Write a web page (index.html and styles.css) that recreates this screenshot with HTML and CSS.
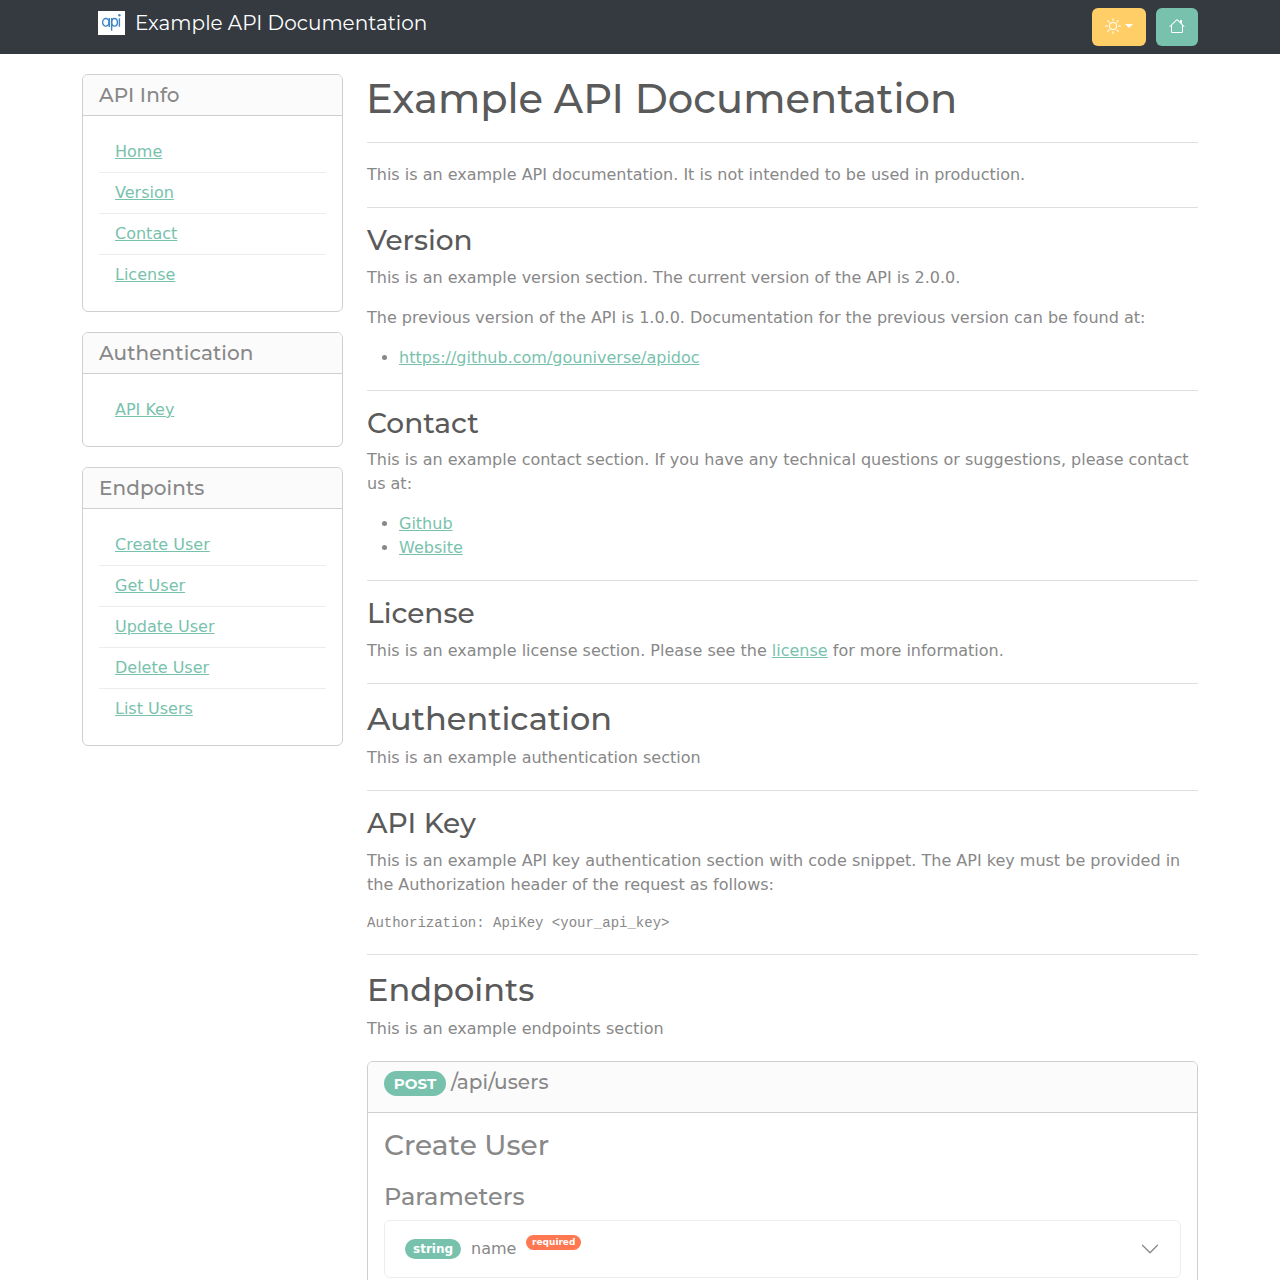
FILE: index.html
```html
<!DOCTYPE html>
<html lang="en">
<head>
<meta charset="utf-8">
<title>Example API Documentation</title>
<link rel="stylesheet" href="styles.css">
</head>
<body>
<header class="navbar">
  <div class="container navbar-inner">
    <a class="brand">
      <svg class="logo" width="27" height="24" viewBox="0 0 27 24" fill="none" stroke="#3d85c8" stroke-width="1.4"><rect width="27" height="24" fill="#fff" stroke="none"/><ellipse cx="7.8" cy="11.3" rx="3.2" ry="3.8"/><path d="M11.3 7v9M13.6 7v12.8M21.4 7.3v8.5"/><ellipse cx="16.5" cy="11.3" rx="2.9" ry="3.8"/><circle cx="21.4" cy="4.3" r="1.2" fill="#3d85c8" stroke="none"/></svg>
      <span class="brand-text">Example API Documentation</span>
    </a>
    <div class="actions">
      <button class="btn btn-warning"><svg width="16" height="16" fill="currentColor" viewBox="0 0 16 16"><path d="M8 11a3 3 0 1 1 0-6 3 3 0 0 1 0 6m0 1a4 4 0 1 0 0-8 4 4 0 0 0 0 8M8 0a.5.5 0 0 1 .5.5v2a.5.5 0 0 1-1 0v-2A.5.5 0 0 1 8 0m0 13a.5.5 0 0 1 .5.5v2a.5.5 0 0 1-1 0v-2A.5.5 0 0 1 8 13m8-5a.5.5 0 0 1-.5.5h-2a.5.5 0 0 1 0-1h2a.5.5 0 0 1 .5.5M3 8a.5.5 0 0 1-.5.5h-2a.5.5 0 0 1 0-1h2A.5.5 0 0 1 3 8m10.657-5.657a.5.5 0 0 1 0 .707l-1.414 1.415a.5.5 0 1 1-.707-.708l1.414-1.414a.5.5 0 0 1 .707 0m-9.193 9.193a.5.5 0 0 1 0 .707L3.05 13.657a.5.5 0 0 1-.707-.707l1.414-1.414a.5.5 0 0 1 .707 0m9.193 2.121a.5.5 0 0 1-.707 0l-1.414-1.414a.5.5 0 0 1 .707-.707l1.414 1.414a.5.5 0 0 1 0 .707M4.464 4.465a.5.5 0 0 1-.707 0L2.343 3.05a.5.5 0 1 1 .707-.707l1.414 1.414a.5.5 0 0 1 0 .708"/></svg><span class="caret"></span></button>
      <button class="btn btn-primary"><svg width="16" height="16" fill="currentColor" viewBox="0 0 16 16"><path fill-rule="evenodd" d="M2 13.5V7h1v6.5a.5.5 0 0 0 .5.5h9a.5.5 0 0 0 .5-.5V7h1v6.5a1.5 1.5 0 0 1-1.5 1.5h-9A1.5 1.5 0 0 1 2 13.5m11-11V6l-2-2V2.5a.5.5 0 0 1 .5-.5h1a.5.5 0 0 1 .5.5"/><path fill-rule="evenodd" d="M7.293 1.5a1 1 0 0 1 1.414 0l6.647 6.646a.5.5 0 0 1-.708.708L8 2.207 1.354 8.854a.5.5 0 1 1-.708-.708z"/></svg></button>
    </div>
  </div>
</header>
<div class="container layout">
  <aside class="sidebar">
    <nav class="card"><h2 class="card-header h5">API Info</h2>
      <ul class="links"><li><a href="#home">Home</a></li><li><a href="#version">Version</a></li><li><a href="#contact">Contact</a></li><li><a href="#license">License</a></li></ul></nav>
    <nav class="card"><h2 class="card-header h5">Authentication</h2>
      <ul class="links"><li><a href="#api-key">API Key</a></li></ul></nav>
    <nav class="card"><h2 class="card-header h5">Endpoints</h2>
      <ul class="links"><li><a href="#create">Create User</a></li><li><a href="#get">Get User</a></li><li><a href="#update">Update User</a></li><li><a href="#delete">Delete User</a></li><li><a href="#list">List Users</a></li></ul></nav>
  </aside>
  <main class="content">
    <h1 class="h1" id="home">Example API Documentation</h1>
    <hr class="rule-intro">
    <p>This is an example API documentation. It is not intended to be used in production.</p>
    <hr>
    <h3 class="h3" id="version">Version</h3>
    <p>This is an example version section. The current version of the API is 2.0.0.</p>
    <p>The previous version of the API is 1.0.0. Documentation for the previous version can be found at:</p>
    <ul><li><a href="#v1">https://github.com/gouniverse/apidoc</a></li></ul>
    <hr>
    <h3 class="h3" id="contact">Contact</h3>
    <p>This is an example contact section. If you have any technical questions or suggestions, please contact us at:</p>
    <ul><li><a href="#github">Github</a></li><li><a href="#website">Website</a></li></ul>
    <hr>
    <h3 class="h3" id="license">License</h3>
    <p>This is an example license section. Please see the <a href="#license">license</a> for more information.</p>
    <hr>
    <h2 class="h2">Authentication</h2>
    <p>This is an example authentication section</p>
    <hr>
    <h3 class="h3" id="api-key">API Key</h3>
    <p>This is an example API key authentication section with code snippet. The API key must be provided in the Authorization header of the request as follows:</p>
    <pre>Authorization: ApiKey &lt;your_api_key&gt;</pre>
    <hr>
    <h2 class="h2">Endpoints</h2>
    <p>This is an example endpoints section</p>
    <section class="card endpoint" id="create">
      <div class="card-header endpoint-header"><span class="badge method">POST</span><span class="h5 path">/api/users</span></div>
      <div class="card-body">
        <h3 class="h3 title">Create User</h3>
        <h4 class="h4">Parameters</h4>
        <button class="param"><span class="badge type">string</span><span class="name">name</span><span class="badge required">required</span>
          <svg class="chevron" width="20" height="20" viewBox="0 0 16 16" fill="#888"><path fill-rule="evenodd" d="M1.646 4.646a.5.5 0 0 1 .708 0L8 10.293l5.646-5.647a.5.5 0 0 1 .708.708l-6 6a.5.5 0 0 1-.708 0l-6-6a.5.5 0 0 1 0-.708z"/></svg></button>
      </div>
    </section>
  </main>
</div>
</body>
</html>
```
FILE: styles.css
```css
* { box-sizing: border-box; }
html { height: 100%; overflow: hidden; }
body { margin: 0; height: 1280px; overflow: hidden; background: #fff; color: #888; font: 16px/24px "DejaVu Sans", sans-serif; }
a { color: #78c2ad; }
.container { width: 1140px; margin: 0 auto; padding: 0 12px; }
.navbar { height: 54px; background: #343a40; }
.navbar-inner { display: flex; justify-content: space-between; align-items: flex-start; padding-top: 8px; }
.brand { display: flex; gap: 10px; margin-left: 16px; padding-top: 3px; color: #fff; text-decoration: none; }
.brand-text { font: 400 20px/24px Montserrat, Inter, sans-serif; }
.actions { display: flex; gap: 10px; }
.btn { display: flex; align-items: center; height: 38px; padding: 0 13px 2px; border: 0; border-radius: 6px; color: #fff; }
.btn-warning { background: #ffce67; }
.btn-primary { background: #78c2ad; }
.caret { margin-left: 4px; border-top: 4.8px solid; border-left: 4.8px solid transparent; border-right: 4.8px solid transparent; }
.layout { display: grid; grid-template-columns: 261px 831px; gap: 24px; padding-top: 20px; }
.card { margin-bottom: 20px; border: 1px solid #cfcfcf; border-radius: 6px; overflow: hidden; }
.card-header { padding: 8px 16px; background: #fbfbfb; border-bottom: 1px solid #cfcfcf; }
.h1, .h2, .h3, .h4, .h5 { margin: 0 0 8px; color: #5a5a5a; font-family: Montserrat, Inter, sans-serif; font-weight: 500; line-height: 1.2; }
.h1 { margin: 0 0 7px -1px; padding-top: 1px; font-size: 40px; }
.h2 { font-size: 32px; }
.h3 { font-size: 28px; }
.h4 { font-size: 24px; }
.h5 { font-size: 20px; margin: 0; letter-spacing: .1px; }
.rule-intro { margin-top: 19px; }
.card .h3, .card .h4, .card .h5, .card-header.h5 { color: #888; }
.links { margin: 0; padding: 16px; list-style: none; }
.links li { padding: 8px 16px; }
.links li + li { border-top: 1px solid #ededed; }
hr { height: 1px; margin: 20px 0 16px; border: 0; background: #dfdfdf; }
hr.rule-intro { margin: 19px 0 20px; }
p { margin: 0 0 16px; }
.content ul { margin: 0 0 16px; padding-left: 32px; }
pre { margin: 0 0 16px; font: 14px/21px "Liberation Mono", monospace; }
.endpoint { margin-top: 20px; }
.endpoint-header { display: flex; align-items: flex-start; height: 51px; }
.badge { color: #fff; background: #78c2ad; font-weight: 700; line-height: 1; border-radius: 100px; }
.method { margin: 1px 5px 0 0; padding: 5px 9.5px 5px 9.75px; font: 700 15px/15px Montserrat, Inter, sans-serif; letter-spacing: .1px; }
.card-body { padding: 16px; }
.card .title { margin-bottom: 20px; }
.param { display: flex; align-items: center; width: 100%; height: 58px; padding: 0 20px; border: 1px solid #ededed; border-radius: 6px; background: #fff; color: #888; font: inherit; }
.type { padding: 4px 8px; font-size: 12px; }
.name { margin: 0 10px; }
.required { align-self: flex-start; margin-top: 14px; padding: 3px 5.7px; font-size: 8.96px; background: #ff7851; }
.chevron { margin-left: auto; }
```
